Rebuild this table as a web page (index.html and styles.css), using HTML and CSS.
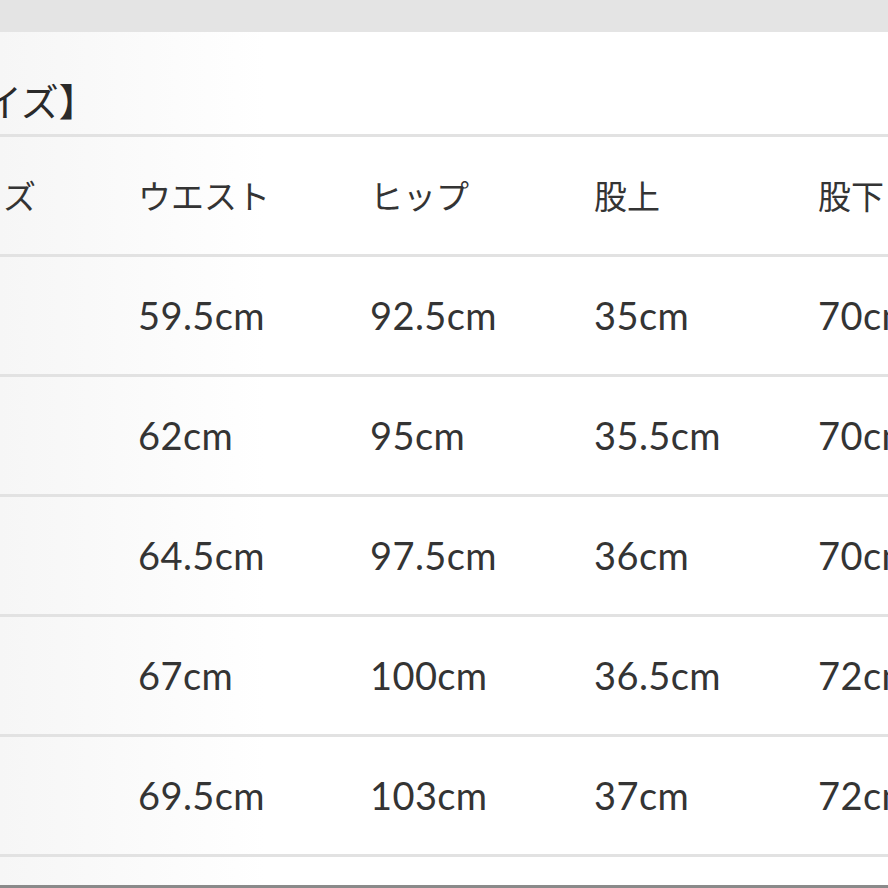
FILE: index.html
```html
<!DOCTYPE html>
<html lang="ja">
<head>
<meta charset="utf-8">
<link rel="stylesheet" href="styles.css">
</head>
<body>
<div class="band"></div>
<div class="sheet">
  <h2 class="title">【サイズ】</h2>
  <div class="table">
    <div class="row head">
      <div class="cell">サイズ</div>
      <div class="cell">ウエスト</div>
      <div class="cell">ヒップ</div>
      <div class="cell">股上</div>
      <div class="cell">股下</div>
    </div>
    <div class="row">
      <div class="cell">S</div>
      <div class="cell">59.5cm</div>
      <div class="cell">92.5cm</div>
      <div class="cell">35cm</div>
      <div class="cell">70cm</div>
    </div>
    <div class="row">
      <div class="cell">M</div>
      <div class="cell">62cm</div>
      <div class="cell">95cm</div>
      <div class="cell">35.5cm</div>
      <div class="cell">70cm</div>
    </div>
    <div class="row">
      <div class="cell">L</div>
      <div class="cell">64.5cm</div>
      <div class="cell">97.5cm</div>
      <div class="cell">36cm</div>
      <div class="cell">70cm</div>
    </div>
    <div class="row">
      <div class="cell">LL</div>
      <div class="cell">67cm</div>
      <div class="cell">100cm</div>
      <div class="cell">36.5cm</div>
      <div class="cell">72cm</div>
    </div>
    <div class="row">
      <div class="cell">3L</div>
      <div class="cell">69.5cm</div>
      <div class="cell">103cm</div>
      <div class="cell">37cm</div>
      <div class="cell">72cm</div>
    </div>
  </div>
</div>
</body>
</html>
```
FILE: styles.css
```css
html, body {
  margin: 0;
  padding: 0;
  width: 888px;
  height: 888px;
  overflow: hidden;
  background: #ffffff;
}
body {
  font-family: "Lato", "Noto Sans CJK JP", sans-serif;
  color: #333333;
}
.band {
  height: 32px;
  background: #e4e4e4;
}
.sheet {
  background: linear-gradient(90deg, #f6f6f6 0%, #ffffff 30%, #ffffff 100%);
  height: 856px;
  border-bottom: 3px solid #8a8a8a;
  box-sizing: border-box;
}
.title {
  margin: 0 0 0 -92px;
  height: 105px;
  box-sizing: border-box;
  padding-top: 46px;
  font-family: "Noto Sans CJK JP", sans-serif;
  font-size: 38px;
  line-height: 44px;
  font-weight: 400;
  color: #2a2a2a;
  border-bottom: 3px solid #e2e2e2;
  white-space: nowrap;
}
.table {
  margin-left: -62px;
  width: 1100px;
}
.row {
  display: grid;
  grid-template-columns: 200px 232px 224px 224px 220px;
  height: 120px;
  align-items: center;
  border-bottom: 3px solid #e2e2e2;
  box-sizing: border-box;
}
.cell {
  font-size: 38px;
  letter-spacing: 0.4px;
  white-space: nowrap;
  color: #343434;
  padding-bottom: 2px;
}
.row.head .cell {
  font-family: "Noto Sans CJK JP", sans-serif;
  font-size: 33px;
  letter-spacing: 0;
}
.row:not(.head) .cell:first-child {
  visibility: hidden;
}
```
